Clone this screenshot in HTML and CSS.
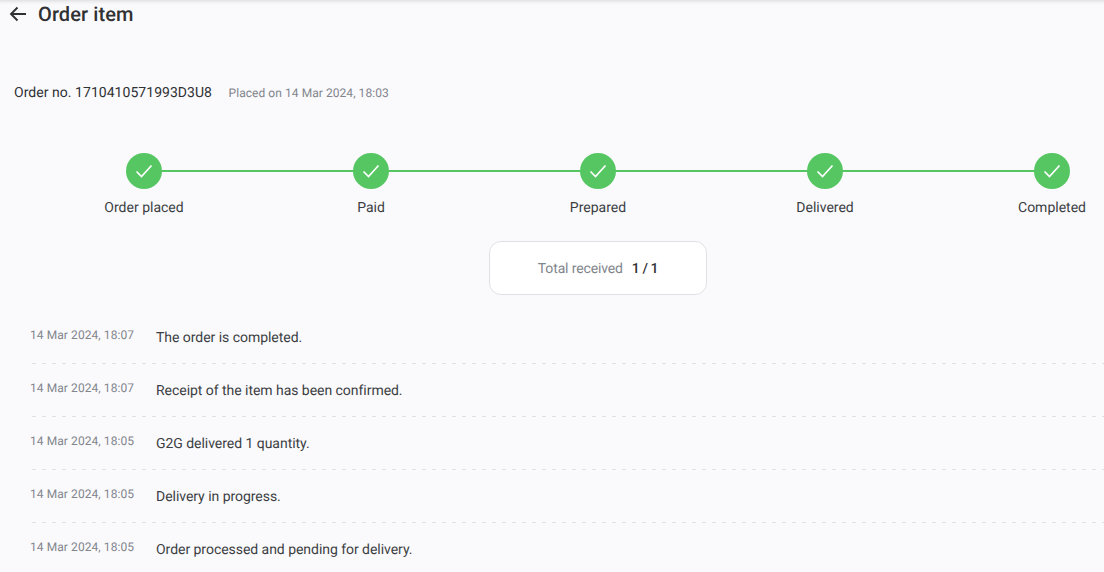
FILE: index.html
```html
<!DOCTYPE html>
<html lang="en">
<head>
<meta charset="utf-8">
<title>Order item</title>
<link rel="stylesheet" href="styles.css">
</head>
<body>
<div class="page">
  <header class="topbar">
    <svg class="back" width="18" height="16" viewBox="0 0 18 16"><path d="M17 8H2M8.5 1.5 2 8l6.5 6.5" fill="none" stroke="#303133" stroke-width="1.9"/></svg>
    <h1 class="title">Order item</h1>
  </header>
  <div class="orderline">
    <span class="orderno">Order no. 1710410571993D3U8</span>
    <span class="placed">Placed on 14 Mar 2024, 18:03</span>
  </div>
  <div class="steps">
    <div class="step"><span class="dot"><svg width="20" height="20" viewBox="0 0 20 20"><path d="M2.5 10.5 7.5 15.5 17.5 4.5" fill="none" stroke="#fff" stroke-width="1.7"/></svg></span><span class="label">Order placed</span></div>
    <div class="step"><span class="dot"><svg width="20" height="20" viewBox="0 0 20 20"><path d="M2.5 10.5 7.5 15.5 17.5 4.5" fill="none" stroke="#fff" stroke-width="1.7"/></svg></span><span class="label">Paid</span></div>
    <div class="step"><span class="dot"><svg width="20" height="20" viewBox="0 0 20 20"><path d="M2.5 10.5 7.5 15.5 17.5 4.5" fill="none" stroke="#fff" stroke-width="1.7"/></svg></span><span class="label">Prepared</span></div>
    <div class="step"><span class="dot"><svg width="20" height="20" viewBox="0 0 20 20"><path d="M2.5 10.5 7.5 15.5 17.5 4.5" fill="none" stroke="#fff" stroke-width="1.7"/></svg></span><span class="label">Delivered</span></div>
    <div class="step"><span class="dot"><svg width="20" height="20" viewBox="0 0 20 20"><path d="M2.5 10.5 7.5 15.5 17.5 4.5" fill="none" stroke="#fff" stroke-width="1.7"/></svg></span><span class="label">Completed</span></div>
  </div>
  <div class="totalwrap">
    <div class="total"><span class="total-label">Total received</span><span class="total-value">1 / 1</span></div>
  </div>
  <ul class="log">
    <li class="row"><span class="time">14 Mar 2024, 18:07</span><span class="msg">The order is completed.</span></li>
    <li class="row"><span class="time">14 Mar 2024, 18:07</span><span class="msg">Receipt of the item has been confirmed.</span></li>
    <li class="row"><span class="time">14 Mar 2024, 18:05</span><span class="msg">G2G delivered 1 quantity.</span></li>
    <li class="row"><span class="time">14 Mar 2024, 18:05</span><span class="msg">Delivery in progress.</span></li>
    <li class="row"><span class="time">14 Mar 2024, 18:05</span><span class="msg">Order processed and pending for delivery.</span></li>
  </ul>
</div>
</body>
</html>
```
FILE: styles.css
```css
* { box-sizing: border-box; }
html, body { margin: 0; padding: 0; height: 100%; overflow: hidden; }
body { background: #fafafd; font-family: Roboto, "Liberation Sans", sans-serif; color: #303133; text-rendering: geometricPrecision; }
.page { height: 572px; overflow: hidden; box-shadow: inset 0 5px 4px -4px rgba(0,0,0,.14); }
.topbar { display: flex; align-items: center; height: 28px; padding-left: 9px; }
.back { flex: none; }
.title { margin: 0 0 0 11px; font-size: 20px; line-height: 28px; font-weight: 500; letter-spacing: 0.1px; }
.orderline { display: flex; align-items: baseline; margin-top: 55px; padding-left: 14px; height: 20px; }
.orderno { font-size: 14px; line-height: 20px; letter-spacing: 0.04px; }
.placed { margin-left: 16.5px; font-size: 12px; line-height: 19px; letter-spacing: 0.06px; color: #82858c; }
.steps { display: flex; justify-content: space-between; position: relative; margin: 50px 0 0 144px; width: 908px; height: 66px; }
.steps::before { content: ""; position: absolute; left: 0; right: 0; top: 17px; height: 2px; background: #55c662; }
.step { position: relative; width: 0; display: flex; flex-direction: column; align-items: center; }
.dot { flex: none; width: 36px; height: 36px; border-radius: 50%; background: #55c662; display: flex; align-items: center; justify-content: center; }
.label { margin-top: 9px; font-size: 14px; line-height: 20px; white-space: nowrap; color: #3c3e42; }
.totalwrap { display: flex; justify-content: center; margin-top: 22px; padding-left: 92px; padding-right: 0; }
.total { display: flex; align-items: center; justify-content: center; width: 218px; height: 54px; padding-top: 2px; background: #fff; border: 1px solid #dfe1e6; border-radius: 12px; font-size: 14px; }
.total-label { color: #82858c; letter-spacing: -0.14px; }
.total-value { margin-left: 9px; font-weight: 500; letter-spacing: -0.4px; }
.log { list-style: none; margin: 16px 0 0 30px; padding: 0; }
.row { display: flex; align-items: flex-start; height: 53px; padding-top: 16px; background: repeating-linear-gradient(90deg, #dfe1e6 0 4px, transparent 4px 10px) 2px 100% / 100% 1px no-repeat; }
.row:last-child { background: none; }
.time { width: 126px; flex: none; font-size: 12px; line-height: 16px; letter-spacing: 0.08px; color: #82858c; }
.msg { margin-top: 1px; font-size: 14px; line-height: 20px; letter-spacing: -0.04px; color: #3c3e42; }
```
